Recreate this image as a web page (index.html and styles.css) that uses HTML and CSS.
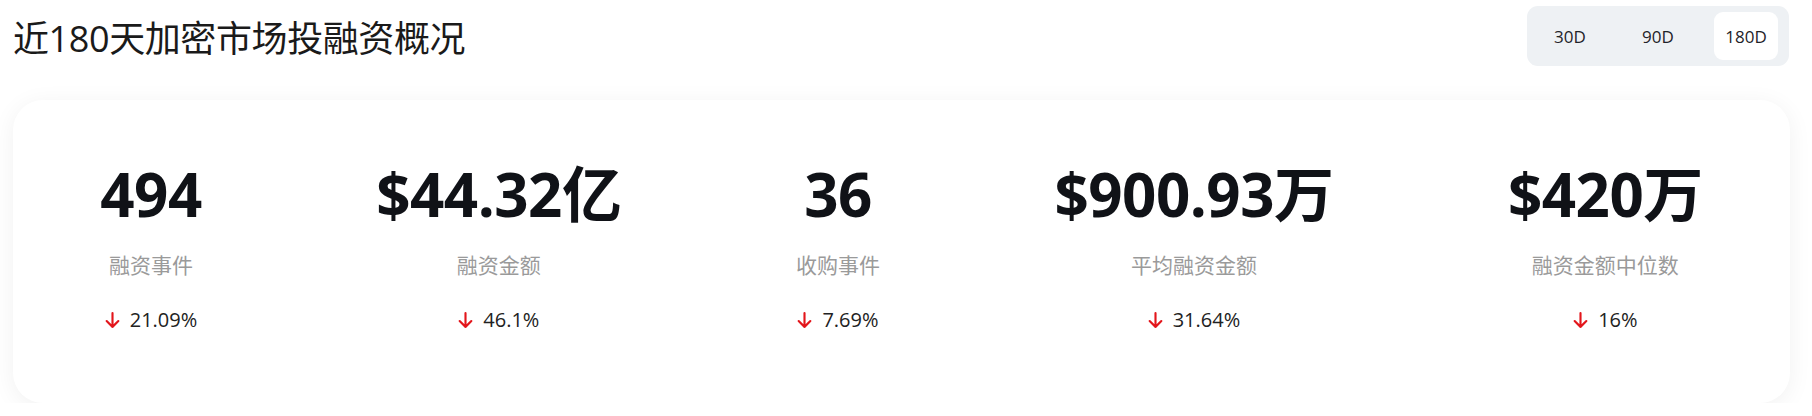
FILE: index.html
```html
<!DOCTYPE html>
<html lang="zh-CN">
<head>
<meta charset="utf-8">
<title>近180天加密市场投融资概况</title>
<link rel="stylesheet" href="styles.css">
</head>
<body>
<div class="page">
  <header class="header">
    <h1 class="title">近180天加密市场投融资概况</h1>
    <div class="tabs">
      <span class="tab">30D</span>
      <span class="tab">90D</span>
      <span class="tab active">180D</span>
    </div>
  </header>
  <section class="card">
    <div class="stat">
      <div class="value">494</div>
      <div class="label">融资事件</div>
      <div class="change"><svg class="arrow" viewBox="0 0 14 16" width="15" height="17"><path d="M7 1V14M1.5 8.5L7 14L12.5 8.5"/></svg><span>21.09%</span></div>
    </div>
    <div class="stat">
      <div class="value">$44.32亿</div>
      <div class="label">融资金额</div>
      <div class="change"><svg class="arrow" viewBox="0 0 14 16" width="15" height="17"><path d="M7 1V14M1.5 8.5L7 14L12.5 8.5"/></svg><span>46.1%</span></div>
    </div>
    <div class="stat">
      <div class="value">36</div>
      <div class="label">收购事件</div>
      <div class="change"><svg class="arrow" viewBox="0 0 14 16" width="15" height="17"><path d="M7 1V14M1.5 8.5L7 14L12.5 8.5"/></svg><span>7.69%</span></div>
    </div>
    <div class="stat">
      <div class="value">$900.93万</div>
      <div class="label">平均融资金额</div>
      <div class="change"><svg class="arrow" viewBox="0 0 14 16" width="15" height="17"><path d="M7 1V14M1.5 8.5L7 14L12.5 8.5"/></svg><span>31.64%</span></div>
    </div>
    <div class="stat">
      <div class="value">$420万</div>
      <div class="label">融资金额中位数</div>
      <div class="change"><svg class="arrow" viewBox="0 0 14 16" width="15" height="17"><path d="M7 1V14M1.5 8.5L7 14L12.5 8.5"/></svg><span>16%</span></div>
    </div>
  </section>
</div>
</body>
</html>
```
FILE: styles.css
```css
* { box-sizing: border-box; }
html, body {
  margin: 0;
  padding: 0;
  background: #ffffff;
}
body {
  font-family: "Open Sans", "Noto Sans CJK SC", sans-serif;
  color: #16181d;
}
.page {
  padding: 6px 22px 0 13px;
}
.header {
  display: flex;
  justify-content: space-between;
  align-items: flex-start;
  height: 60px;
}
.title {
  margin: 0;
  padding-top: 3px;
  font-family: "Open Sans", "Noto Sans CJK SC", sans-serif;
  font-size: 36px;
  font-weight: 400;
  line-height: 60px;
  color: #1a1a1a;
  letter-spacing: -0.4px;
}
.tabs {
  display: flex;
  gap: 24px;
  padding: 6px 11px;
  background: #eef1f4;
  border-radius: 11px;
  margin-right: 1px;
}
.tab {
  width: 64px;
  height: 48px;
  display: flex;
  align-items: center;
  justify-content: center;
  font-size: 17px;
  color: #1f2329;
  border-radius: 9px;
}
.tab.active {
  background: #ffffff;
}
.card {
  margin-top: 34px;
  height: 303px;
  background: #ffffff;
  border-radius: 30px;
  box-shadow: 0 4px 24px rgba(0, 0, 0, 0.06);
  display: flex;
  justify-content: space-around;
  align-items: flex-start;
  padding-top: 64px;
}
.stat {
  display: flex;
  flex-direction: column;
  align-items: center;
}
.value {
  font-size: 60px;
  font-weight: 700;
  line-height: 60px;
  color: #101217;
  letter-spacing: -0.5px;
}
.label {
  margin-top: 29px;
  font-size: 21px;
  line-height: 25px;
  color: #9a9a9a;
}
.change {
  margin-top: 29px;
  display: flex;
  align-items: center;
  gap: 10px;
  font-size: 20px;
  line-height: 26px;
  color: #222222;
}
.arrow {
  fill: none;
  stroke: #e3161c;
  stroke-width: 2;
  stroke-linecap: round;
  stroke-linejoin: round;
}
```
